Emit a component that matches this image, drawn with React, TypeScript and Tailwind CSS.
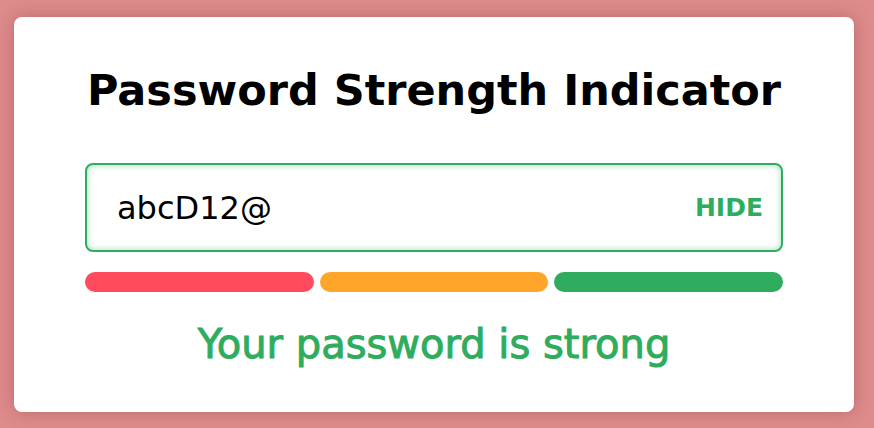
export default function App() {
  return (
    <div className="flex h-[428px] w-[874px] items-start bg-[#de8b8c] pl-[14px] pt-[17px] font-['DejaVu_Sans',sans-serif]">
      <div className="flex w-[840px] flex-col items-center rounded-lg bg-white px-[71px] pt-[47px] pb-[44px] shadow-[0_0_18px_rgba(90,20,20,0.28)]">
        <h1 className="text-[43px] font-bold leading-[52px] text-black">Password Strength Indicator</h1>
        <div className="mt-[47px] flex h-[89px] w-full items-center justify-between rounded-lg border-2 border-[#2fac5e] pl-[30px] pr-[18px] shadow-[inset_0_0_6px_rgba(47,172,94,0.45)]">
          <span className="text-[32px] text-black">abcD12@</span>
          <span className="text-[25px] font-bold text-[#2fac5e]">HIDE</span>
        </div>
        <div className="mt-[20px] flex w-full gap-[6px]">
          <div className="h-[20px] flex-1 rounded-full bg-[#ff4b5c]" />
          <div className="h-[20px] flex-1 rounded-full bg-[#ffa52a]" />
          <div className="h-[20px] flex-1 rounded-full bg-[#2fac5e]" />
        </div>
        <p className="mt-[28px] text-[40px] leading-[48px] text-[#2fac5e] [-webkit-text-stroke:1px_#2fac5e]">Your password is strong</p>
      </div>
    </div>
  );
}
